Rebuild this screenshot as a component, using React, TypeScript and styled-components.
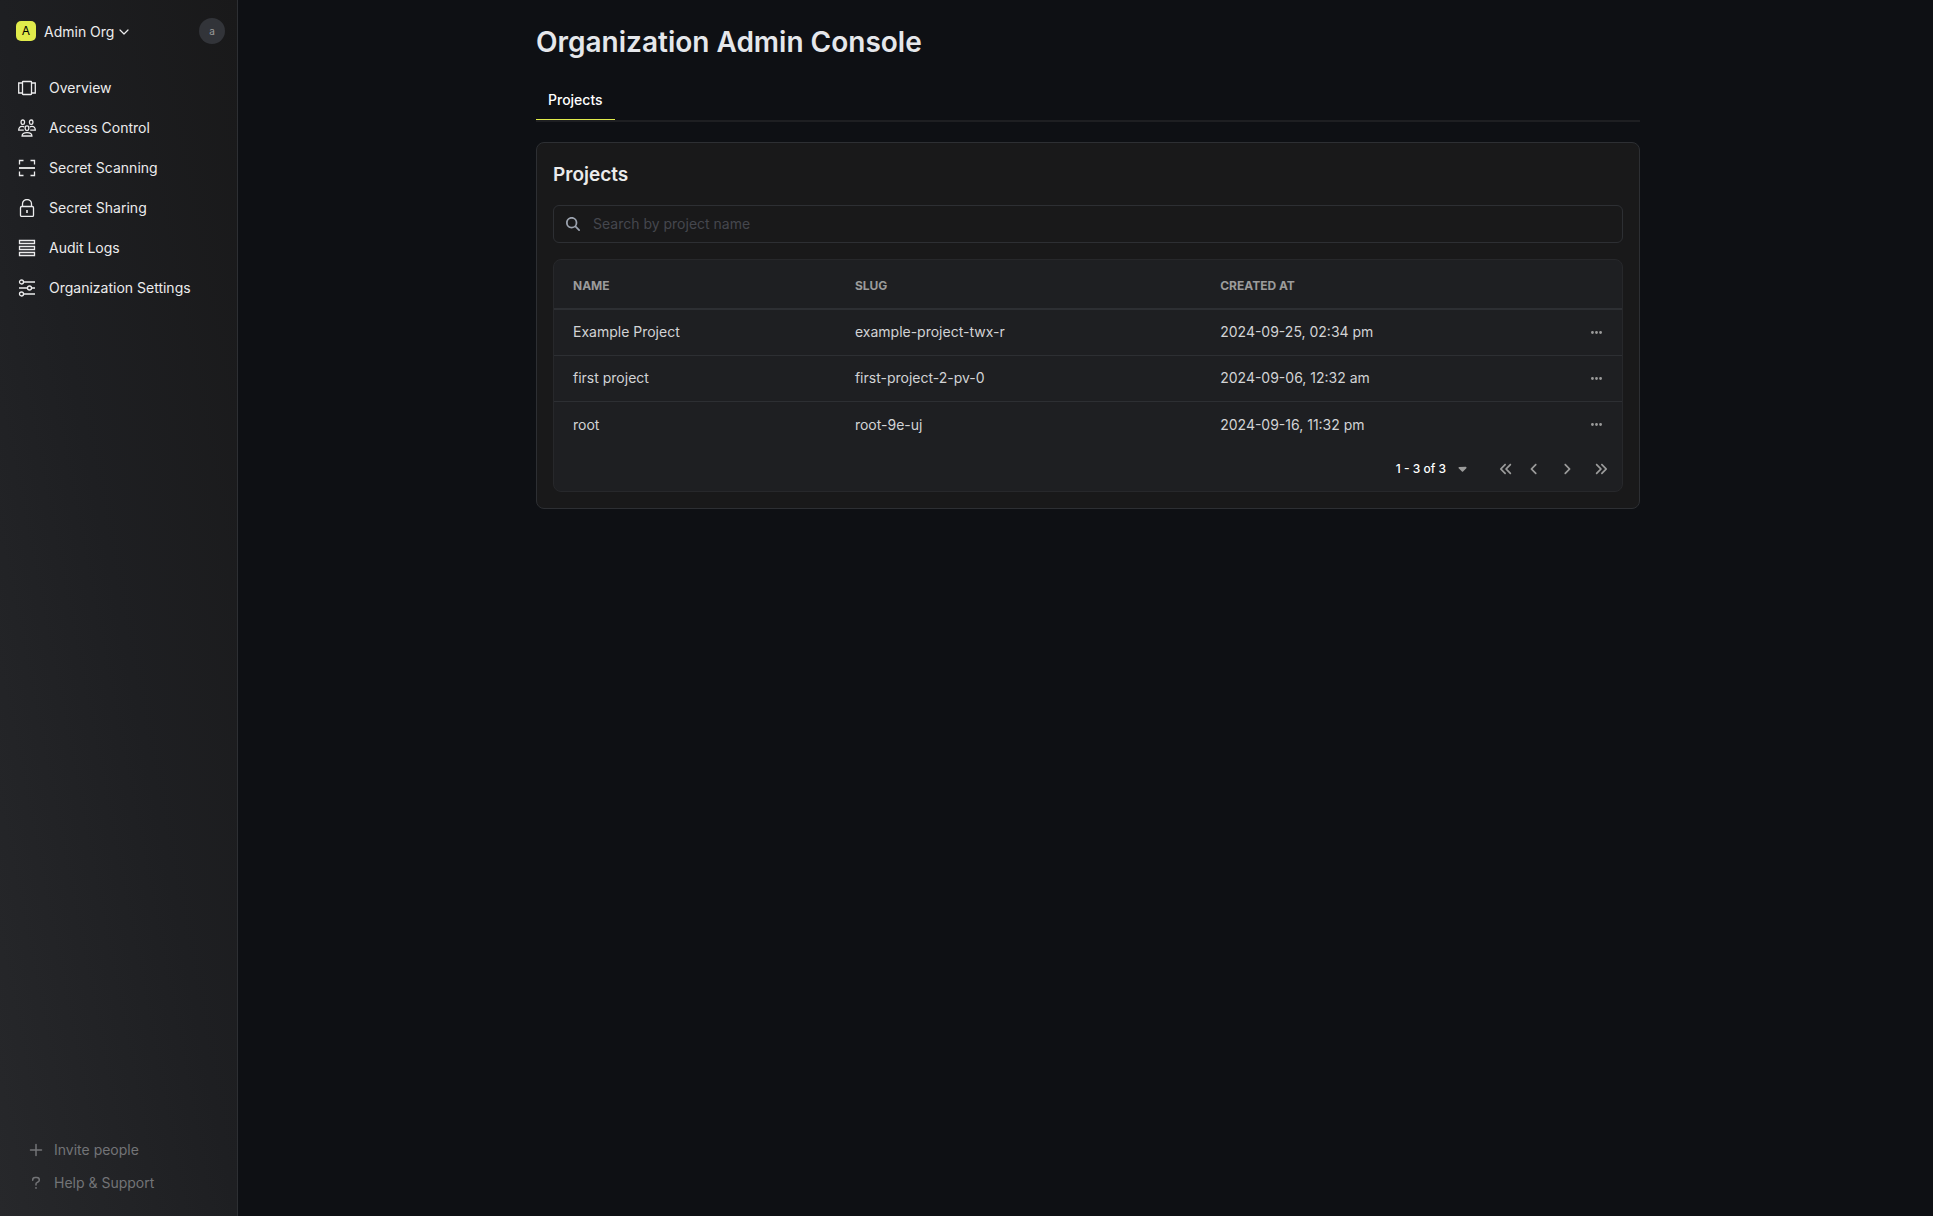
import React from "react";
import styled, { createGlobalStyle } from "styled-components";
import {
  FaAngleLeft,
  FaAngleRight,
  FaAnglesLeft,
  FaAnglesRight,
  FaCaretDown,
  FaEllipsis,
  FaMagnifyingGlass,
} from "react-icons/fa6";

const color = {
  bunker: "#0e1014",
  panel: "#19191a",
  surface: "#1e1f22",
  raised: "#27282b",
  line: "#2d2f33",
  muted: "#737477",
  label: "#9b9b9b",
  text: "#d2d3d5",
  nav: "#ececed",
  bright: "#e5e7eb",
  primary: "#e0eb4b",
};

const GlobalStyle = createGlobalStyle`
  *, *::before, *::after { box-sizing: border-box; }
  body {
    margin: 0;
    background: ${color.bunker};
    color: ${color.text};
    font-family: Inter, "Liberation Sans", sans-serif;
    font-size: 14px;
    line-height: 20px;
    -webkit-font-smoothing: antialiased;
  }
  button, input { font: inherit; color: inherit; }
  h1, h2 { margin: 0; }
`;

const Layout = styled.div`
  display: flex;
  min-height: 100vh;
`;

const Sidebar = styled.aside`
  display: flex;
  flex-direction: column;
  flex: none;
  width: 238px;
  border-right: 1px solid ${color.line};
  background: linear-gradient(to top right, ${color.raised}, ${color.surface} 50%, ${color.panel});
`;

const PlainButton = styled.button`
  display: flex;
  align-items: center;
  padding: 0;
  border: 0;
  background: none;
  cursor: pointer;
`;

const SidebarTop = styled.header`
  display: flex;
  align-items: center;
  justify-content: space-between;
  height: 64px;
  padding: 0 12px 2px 16px;
`;

const OrgButton = styled(PlainButton)`
  gap: 8px;
  color: ${color.nav};
`;

const OrgMark = styled.span`
  display: grid;
  place-items: center;
  width: 20px;
  height: 20px;
  border-radius: 5px;
  background: ${color.primary};
  color: #000;
  font-size: 12px;
`;

const OrgName = styled.span`
  display: flex;
  align-items: center;
  gap: 5px;
  padding-top: 2px;
`;

const Avatar = styled(PlainButton)`
  justify-content: center;
  width: 26px;
  height: 26px;
  border-radius: 50%;
  background: #323439;
  color: ${color.label};
  font-size: 10px;
`;

const Nav = styled.nav`
  display: flex;
  flex-direction: column;
  flex: 1;
  padding: 4px 8px;
`;

const NavLink = styled.a`
  display: flex;
  align-items: center;
  gap: 12px;
  height: 40px;
  padding: 0 10px;
  color: ${color.nav};
  text-decoration: none;

  svg { flex: none; }
`;

const SidebarBottom = styled.div`
  display: flex;
  flex-direction: column;
  align-items: flex-start;
  padding: 0 28px 17px;
`;

const FooterButton = styled(PlainButton)`
  gap: 10px;
  height: 33px;
  color: ${color.muted};
`;

const Main = styled.main`
  flex: 1;
  min-width: 0;
  padding-left: 5px;
`;

const Content = styled.div`
  width: 100%;
  max-width: 1152px;
  margin: 0 auto;
  padding: 24px;
`;

const Title = styled.h1`
  color: ${color.bright};
  font-size: 28px;
  font-weight: 600;
  line-height: 36px;
`;

const Tabs = styled.div`
  display: flex;
  margin-top: 20px;
  border-bottom: 2px solid ${color.surface};
`;

const Tab = styled.button`
  height: 40px;
  padding: 0 12px;
  border: 0;
  border-bottom: 1px solid ${color.primary};
  background: none;
  color: #fff;
  font-weight: 500;
  cursor: pointer;
`;

const Card = styled.section`
  margin-top: 20px;
  padding: 16px;
  border: 1px solid ${color.line};
  border-radius: 8px;
  background: ${color.panel};
`;

const CardTitle = styled.h2`
  padding-top: 2px;
  margin-bottom: 16px;
  color: #ebebeb;
  font-size: 19px;
  font-weight: 600;
  line-height: 28px;
`;

const SearchBox = styled.label`
  display: flex;
  align-items: center;
  gap: 13px;
  height: 38px;
  padding: 0 12px;
  border: 1px solid ${color.line};
  border-radius: 6px;
  color: #9ca3af;
`;

const SearchInput = styled.input`
  flex: 1;
  min-width: 0;
  padding: 0;
  border: 0;
  outline: 0;
  background: none;
  color: ${color.text};

  &::placeholder { color: #45474e; opacity: 1; }
`;

const TableCard = styled.div`
  margin-top: 16px;
  border: 1px solid ${color.raised};
  border-radius: 8px;
  background: ${color.surface};
`;

const Table = styled.table`
  width: 100%;
  table-layout: fixed;
  border-collapse: separate;
  border-spacing: 0;
  text-align: left;
`;

const HeadCell = styled.th<{ $width?: string }>`
  width: ${(p) => p.$width ?? "auto"};
  height: 50px;
  padding: 3px 19px 0;
  border-bottom: 2px solid ${color.line};
  color: ${color.label};
  font-size: 12px;
  line-height: 16px;
  font-weight: 700;
  text-transform: uppercase;
`;

const Row = styled.tr`
  &:not(:last-child) td { border-bottom: 1px solid ${color.line}; }
`;

const Cell = styled.td`
  height: 46px;
  padding: 0 19px 1px;
`;

const RowMenu = styled(PlainButton)`
  margin-left: auto;
  color: ${color.label};
`;

const Pagination = styled.div`
  display: flex;
  align-items: center;
  justify-content: flex-end;
  height: 43px;
  padding: 0 4px 2px 0;
`;

const RangeButton = styled(PlainButton)`
  gap: 10px;
  margin-right: 25px;
  color: #fff;
  font-size: 12px;
  font-weight: 500;

  svg { color: ${color.label}; }
`;

const PageButton = styled(PlainButton)<{ $width: number }>`
  justify-content: center;
  width: ${(p) => p.$width}px;
  height: 24px;
  color: ${color.label};
`;

const NavIcon = ({ children }: { children: React.ReactNode }) => (
  <svg width="19" height="18" viewBox="0 0 19 18" fill="none" stroke="currentColor" strokeWidth="1.3" aria-hidden="true">
    {children}
  </svg>
);

const OverviewIcon = () => (
  <NavIcon>
    <rect x="4.5" y="2.5" width="9" height="13" rx="0.5" />
    <path d="M4.5 4H.7v10h3.8M13.5 4h3.8v10h-3.8" />
  </NavIcon>
);

const AccessIcon = () => (
  <NavIcon>
    <rect x="3.1" y="1" width="3.4" height="4.4" rx="1.6" />
    <rect x="11.5" y="1" width="3.4" height="4.4" rx="1.6" />
    <rect x="7.2" y="6.8" width="3.6" height="4.8" rx="1.8" />
    <path d="M5.8 11.2H.7c0-2.2 1.3-3.8 3.4-3.8.9 0 1.6.2 2.2.7M12.2 11.2h5.1c0-2.2-1.3-3.8-3.4-3.8-.9 0-1.6.2-2.2.7" />
    <path d="M4.1 17c0-2.2 1.6-3.4 4.9-3.4s4.9 1.2 4.9 3.4z" />
  </NavIcon>
);

const ScanIcon = () => (
  <NavIcon>
    <path d="M1.5 5.5v-4h4M12.5 1.5h4v4M16.5 12.5v4h-4M5.5 16.5h-4v-4" />
    <path d="M1 9h16" strokeWidth="1.8" />
  </NavIcon>
);

const LockIcon = () => (
  <NavIcon>
    <rect x="2.5" y="7.5" width="13" height="10" rx="1.2" />
    <path d="M4.5 7.5V4.8a4.5 4.3 0 0 1 9 0v2.7" />
    <path d="M9 11v3" strokeWidth="1.6" />
  </NavIcon>
);

const LogsIcon = () => (
  <NavIcon>
    <path d="M1.5 1.5h15v3h-15zM1.5 7.5h15v3h-15zM1.5 13.5h15v3h-15z" />
  </NavIcon>
);

const SettingsIcon = () => (
  <NavIcon>
    <circle cx="3.5" cy="3" r="2" />
    <circle cx="11.5" cy="9" r="2" />
    <circle cx="3.5" cy="15" r="2" />
    <path d="M5.500 3H17M1 9h8.500M13.500 9H17M5.500 15H17" />
  </NavIcon>
);

const ChevronIcon = () => (
  <svg width="10" height="10" viewBox="0 0 10 10" fill="none" stroke="currentColor" strokeWidth="1.2" aria-hidden="true">
    <path d="M1 3l4 4 4-4" strokeLinecap="round" strokeLinejoin="round" />
  </svg>
);

const PlusIcon = () => (
  <svg width="16" height="16" viewBox="0 0 16 16" fill="none" stroke="currentColor" strokeWidth="1.5" aria-hidden="true">
    <path d="M8 2.5v11M2.5 8h11" strokeLinecap="round" />
  </svg>
);

const QuestionIcon = () => (
  <svg width="16" height="16" viewBox="0 0 16 16" fill="none" stroke="currentColor" strokeWidth="1.5" aria-hidden="true">
    <path d="M4.700 5.300V5c0-1.500 1.100-2.500 2.500-2.500h1.600c1.400 0 2.500 1 2.500 2.400 0 .9-.5 1.600-1.200 2L8.900 7.700c-.6.3-.9.8-.9 1.400v.9" strokeLinecap="round" />
    <circle cx="8" cy="12.900" r=".9" fill="currentColor" stroke="none" />
  </svg>
);

const navItems = [
  { label: "Overview", Icon: OverviewIcon },
  { label: "Access Control", Icon: AccessIcon },
  { label: "Secret Scanning", Icon: ScanIcon },
  { label: "Secret Sharing", Icon: LockIcon },
  { label: "Audit Logs", Icon: LogsIcon },
  { label: "Organization Settings", Icon: SettingsIcon },
];

const projects = [
  { name: "Example Project", slug: "example-project-twx-r", createdAt: "2024-09-25, 02:34 pm" },
  { name: "first project", slug: "first-project-2-pv-0", createdAt: "2024-09-06, 12:32 am" },
  { name: "root", slug: "root-9e-uj", createdAt: "2024-09-16, 11:32 pm" },
];

export default function App() {
  return (
    <>
      <GlobalStyle />
      <Layout>
        <Sidebar>
          <SidebarTop>
            <OrgButton type="button">
              <OrgMark>A</OrgMark>
              <OrgName>
                Admin Org
                <ChevronIcon />
              </OrgName>
            </OrgButton>
            <Avatar type="button">a</Avatar>
          </SidebarTop>
          <Nav>
            {navItems.map(({ label, Icon }) => (
              <NavLink key={label} href="#">
                <Icon />
                {label}
              </NavLink>
            ))}
          </Nav>
          <SidebarBottom>
            <FooterButton type="button">
              <PlusIcon />
              Invite people
            </FooterButton>
            <FooterButton type="button">
              <QuestionIcon />
              Help &amp; Support
            </FooterButton>
          </SidebarBottom>
        </Sidebar>
        <Main>
          <Content>
            <Title>Organization Admin Console</Title>
            <Tabs role="tablist">
              <Tab type="button" role="tab" aria-selected="true">
                Projects
              </Tab>
            </Tabs>
            <Card>
              <CardTitle>Projects</CardTitle>
              <SearchBox>
                <FaMagnifyingGlass size={14} aria-hidden="true" />
                <SearchInput type="text" placeholder="Search by project name" aria-label="Search by project name" />
              </SearchBox>
              <TableCard>
                <Table>
                  <thead>
                    <tr>
                      <HeadCell $width="26.4%">Name</HeadCell>
                      <HeadCell $width="34.2%">Slug</HeadCell>
                      <HeadCell>Created At</HeadCell>
                      <HeadCell $width="64px" aria-label="Actions" />
                    </tr>
                  </thead>
                  <tbody>
                    {projects.map((p) => (
                      <Row key={p.slug}>
                        <Cell>{p.name}</Cell>
                        <Cell>{p.slug}</Cell>
                        <Cell>{p.createdAt}</Cell>
                        <Cell>
                          <RowMenu type="button" aria-label={`Actions for ${p.name}`}>
                            <FaEllipsis size={13} />
                          </RowMenu>
                        </Cell>
                      </Row>
                    ))}
                  </tbody>
                </Table>
                <Pagination>
                  <RangeButton type="button">
                    1 - 3 of 3
                    <FaCaretDown size={13} />
                  </RangeButton>
                  <PageButton type="button" $width={24} aria-label="First page">
                    <FaAnglesLeft size={14} />
                  </PageButton>
                  <PageButton type="button" $width={32} aria-label="Previous page">
                    <FaAngleLeft size={14} />
                  </PageButton>
                  <PageButton type="button" $width={34} aria-label="Next page">
                    <FaAngleRight size={14} />
                  </PageButton>
                  <PageButton type="button" $width={34} aria-label="Last page">
                    <FaAnglesRight size={14} />
                  </PageButton>
                </Pagination>
              </TableCard>
            </Card>
          </Content>
        </Main>
      </Layout>
    </>
  );
}
